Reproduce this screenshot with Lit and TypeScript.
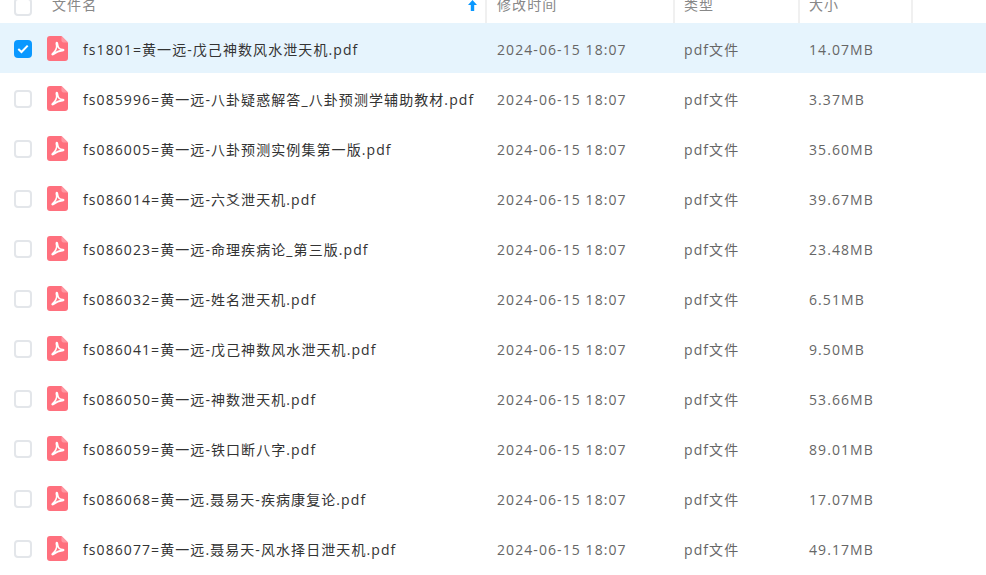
import { LitElement, html, css, svg } from "lit";
import { customElement } from "lit/decorators.js";

const NAMES: [string, string][] = [
  ["fs1801=黄一远-戊己神数风水泄天机.pdf", "14.07MB"],
  ["fs085996=黄一远-八卦疑惑解答_八卦预测学辅助教材.pdf", "3.37MB"],
  ["fs086005=黄一远-八卦预测实例集第一版.pdf", "35.60MB"],
  ["fs086014=黄一远-六爻泄天机.pdf", "39.67MB"],
  ["fs086023=黄一远-命理疾病论_第三版.pdf", "23.48MB"],
  ["fs086032=黄一远-姓名泄天机.pdf", "6.51MB"],
  ["fs086041=黄一远-戊己神数风水泄天机.pdf", "9.50MB"],
  ["fs086050=黄一远-神数泄天机.pdf", "53.66MB"],
  ["fs086059=黄一远-铁口断八字.pdf", "89.01MB"],
  ["fs086068=黄一远.聂易天-疾病康复论.pdf", "17.07MB"],
  ["fs086077=黄一远.聂易天-风水择日泄天机.pdf", "49.17MB"],
];

const pdfIcon = svg`<svg class="pdf" viewBox="0 0 21 25" width="21" height="25">
  <path d="M3 0H14.5L21 6.5V22a3 3 0 0 1-3 3H3a3 3 0 0 1-3-3V3a3 3 0 0 1 3-3Z" fill="#ff707e"/>
  <path d="M14.5 0L21 6.5H16.5a2 2 0 0 1-2-2Z" fill="#ff97a2"/>
  <path d="M9.9 6.6C9.2 6.6 9.2 7.6 9.6 9.2C10.2 11.8 8.3 15.6 5.6 17.6C4.7 18.3 5.3 19.2 6.3 18.4C8.6 16.4 11.3 14.4 15.8 14.6C17 14.6 16.9 13.6 15.8 13.6C13.4 13.6 11.2 11.6 10.7 9.1C10.4 7.6 10.5 6.6 9.9 6.6Z" fill="none" stroke="#fff" stroke-width="1.6" stroke-linejoin="round"/>
</svg>`;

@customElement("app-root")
export class AppRoot extends LitElement {
  static styles = css`
    :host {
      display: block;
      width: 986px;
      height: 575px;
      overflow: hidden;
      background: #fff;
      font-family: "Open Sans", "Noto Sans CJK SC", sans-serif;
      font-size: 14px;
      letter-spacing: 1.08px;
      color: #666;
    }
    .head {
      display: grid;
      grid-template-columns: 487px 188px 125px 113px;
      height: 23px;
      overflow: hidden;
      color: #888;
    }
    .hcell {
      position: relative;
      display: flex;
      align-items: flex-end;
      height: 23px;
      padding: 0 0 8px 10px;
      box-sizing: border-box;
      border-right: 2px solid #f0f0f0;
      line-height: 20px;
      white-space: nowrap;
    }
    .hcell + .hcell {
      padding-left: 9px;
    }
    .hcell:nth-child(2) {
      padding-left: 10px;
    }
    .hcell.first {
      padding-left: 14px;
      gap: 20px;
    }
    .hlabel {
      display: block;
    }
    .first .box {
      margin-bottom: -1px;
    }
    .arrow {
      position: absolute;
      right: 8px;
      top: 0;
    }
    .row {
      display: grid;
      grid-template-columns: 486px 188px 125px 113px;
      height: 50px;
      box-sizing: border-box;
      padding-top: 2px;
      align-items: center;
    }
    .row.sel {
      background: #e6f4fd;
    }
    .name {
      display: flex;
      align-items: center;
      padding-left: 14px;
      color: #333;
      white-space: nowrap;
    }
    .box {
      width: 18px;
      height: 18px;
      box-sizing: border-box;
      border: 2px solid #e3e6ea;
      border-radius: 4px;
      background: #fff;
      flex: none;
    }
    .box.on {
      border: 0;
      background: #0a98ff;
      display: flex;
      align-items: center;
      justify-content: center;
    }
    .pdf {
      margin-left: 15px;
      margin-top: -1px;
      flex: none;
    }
    .label {
      margin-left: 15px;
    }
    .cell {
      padding-left: 11px;
      white-space: nowrap;
    }
    .cell.t {
      padding-left: 10px;
    }
  `;

  render() {
    return html`
      <div class="head">
        <div class="hcell first">
          <span class="box"></span><span class="hlabel">文件名</span>
          <svg class="arrow" width="9" height="11" viewBox="0 0 9 11">
            <path d="M4.5 0L9 5H6.2V11H2.8V5H0Z" fill="#0a98ff" />
          </svg>
        </div>
        <div class="hcell">修改时间</div>
        <div class="hcell">类型</div>
        <div class="hcell">大小</div>
      </div>
      ${NAMES.map(
        ([n, s], i) => html`
          <div class="row ${i === 0 ? "sel" : ""}">
            <div class="name">
              ${i === 0
                ? html`<span class="box on"
                    ><svg width="12" height="10" viewBox="0 0 12 10">
                      <path d="M1.3 5L4.5 8L10.7 1.6" fill="none" stroke="#fff" stroke-width="2" /></svg
                  ></span>`
                : html`<span class="box"></span>`}
              ${pdfIcon}
              <span class="label">${n}</span>
            </div>
            <div class="cell">2024-06-15 18:07</div>
            <div class="cell t">pdf文件</div>
            <div class="cell t">${s}</div>
          </div>
        `
      )}
    `;
  }
}
